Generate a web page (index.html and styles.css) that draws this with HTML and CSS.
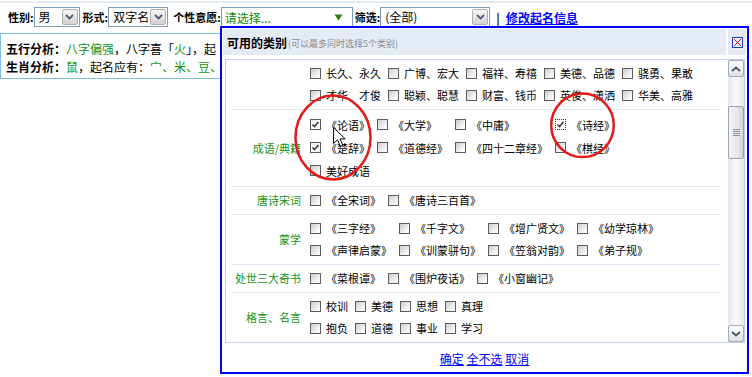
FILE: index.html
```html
<!DOCTYPE html>
<html lang="zh">
<head>
<meta charset="utf-8">
<title>起名 - 类别选择</title>
<link rel="stylesheet" href="styles.css">
</head>
<body>
<div class="topbar">
  <span class="lbl lbl-first">性别:</span>
  <div class="combo c-sex"><span class="val">男</span><span class="btn"><svg width="9" height="6" viewBox="0 0 9 6"><path d="M1 1l3.5 3.5L8 1" fill="none" stroke="#4a5a78" stroke-width="1.8"/></svg></span></div>
  <span class="lbl">形式:</span>
  <div class="combo c-form"><span class="val">双字名</span><span class="btn"><svg width="9" height="6" viewBox="0 0 9 6"><path d="M1 1l3.5 3.5L8 1" fill="none" stroke="#4a5a78" stroke-width="1.8"/></svg></span></div>
  <span class="lbl lbl-wide">个性意愿:</span>
  <div class="picker"><span class="ph">请选择...</span><svg width="9" height="7" viewBox="0 0 9 7"><path d="M0.5 0.5h8L4.5 6.5z" fill="#2f7d1e"/></svg></div>
  <span class="lbl lbl-tight">筛选:</span>
  <div class="combo c-filter"><span class="val">(全部)</span><span class="btn"><svg width="9" height="6" viewBox="0 0 9 6"><path d="M1 1l3.5 3.5L8 1" fill="none" stroke="#4a5a78" stroke-width="1.8"/></svg></span></div>
  <span class="bar">|</span>
  <a class="edit" href="#">修改起名信息</a>
</div>

<div class="analysis">
  <p><b>五行分析：</b><em>八字偏强</em>，八字喜「<em>火</em>」，起</p>
  <p><b>生肖分析：</b><em>鼠</em>，起名应有：<em>宀、米、豆、</em></p>
</div>

<div class="popup">
  <div class="pop-head">
    <div class="pop-title"><b>可用的类别</b><span class="hint">(可以最多同时选择5个类别)</span></div>
    <div class="pop-close"><svg width="11" height="11" viewBox="0 0 11 11"><rect x="0.5" y="0.5" width="10" height="10" fill="#eef2fa" stroke="#1d3fae"/><path d="M2 2l7 7M9 2l-7 7" stroke="#d11" stroke-width="1"/></svg></div>
  </div>
  <div class="pop-body">
    <div class="list">
      <div class="row">
        <div class="cat"></div>
        <div class="opts g5">
          <label class="opt"><span class="cb"></span>长久、永久</label>
          <label class="opt"><span class="cb"></span>广博、宏大</label>
          <label class="opt"><span class="cb"></span>福祥、寿禧</label>
          <label class="opt"><span class="cb"></span>美德、品德</label>
          <label class="opt"><span class="cb"></span>骁勇、果敢</label>
          <label class="opt"><span class="cb"></span>才华、才俊</label>
          <label class="opt"><span class="cb"></span>聪颖、聪慧</label>
          <label class="opt"><span class="cb"></span>财富、钱币</label>
          <label class="opt"><span class="cb"></span>英俊、潇洒</label>
          <label class="opt"><span class="cb"></span>华美、高雅</label>
        </div>
      </div>
      <div class="row tall">
        <div class="cat">成语/典籍</div>
        <div class="opts g4">
          <label class="opt"><span class="cb on"><svg width="9" height="9" viewBox="0 0 9 9"><path d="M1.5 4.5l2 2 4-4.5" fill="none" stroke="#3c3c3c" stroke-width="1.7"/></svg></span>《论语》</label>
          <label class="opt"><span class="cb"></span>《大学》</label>
          <label class="opt"><span class="cb"></span>《中庸》</label>
          <label class="opt"><span class="cb on focus"><svg width="9" height="9" viewBox="0 0 9 9"><path d="M1.5 4.5l2 2 4-4.5" fill="none" stroke="#3c3c3c" stroke-width="1.7"/></svg></span>《诗经》</label>
          <label class="opt"><span class="cb on"><svg width="9" height="9" viewBox="0 0 9 9"><path d="M1.5 4.5l2 2 4-4.5" fill="none" stroke="#3c3c3c" stroke-width="1.7"/></svg></span>《楚辞》</label>
          <label class="opt"><span class="cb"></span>《道德经》</label>
          <label class="opt"><span class="cb"></span>《四十二章经》</label>
          <label class="opt"><span class="cb"></span>《棋经》</label>
          <label class="opt"><span class="cb"></span>美好成语</label>
        </div>
      </div>
      <div class="row">
        <div class="cat">唐诗宋词</div>
        <div class="opts g2">
          <label class="opt"><span class="cb"></span>《全宋词》</label>
          <label class="opt"><span class="cb"></span>《唐诗三百首》</label>
        </div>
      </div>
      <div class="row">
        <div class="cat">蒙学</div>
        <div class="opts g4 even">
          <label class="opt"><span class="cb"></span>《三字经》</label>
          <label class="opt"><span class="cb"></span>《千字文》</label>
          <label class="opt"><span class="cb"></span>《增广贤文》</label>
          <label class="opt"><span class="cb"></span>《幼学琼林》</label>
          <label class="opt"><span class="cb"></span>《声律启蒙》</label>
          <label class="opt"><span class="cb"></span>《训蒙骈句》</label>
          <label class="opt"><span class="cb"></span>《笠翁对韵》</label>
          <label class="opt"><span class="cb"></span>《弟子规》</label>
        </div>
      </div>
      <div class="row">
        <div class="cat">处世三大奇书</div>
        <div class="opts g3">
          <label class="opt"><span class="cb"></span>《菜根谭》</label>
          <label class="opt"><span class="cb"></span>《围炉夜话》</label>
          <label class="opt"><span class="cb"></span>《小窗幽记》</label>
        </div>
      </div>
      <div class="row">
        <div class="cat">格言、名言</div>
        <div class="opts g4">
          <label class="opt"><span class="cb"></span>校训</label>
          <label class="opt"><span class="cb"></span>美德</label>
          <label class="opt"><span class="cb"></span>思想</label>
          <label class="opt"><span class="cb"></span>真理</label>
          <label class="opt"><span class="cb"></span>抱负</label>
          <label class="opt"><span class="cb"></span>道德</label>
          <label class="opt"><span class="cb"></span>事业</label>
          <label class="opt"><span class="cb"></span>学习</label>
        </div>
      </div>
    </div>
    <div class="vbar">
      <div class="arrow"><svg width="10" height="6" viewBox="0 0 10 6"><path d="M1 5l4-3.5L9 5" fill="none" stroke="#4b5872" stroke-width="2"/></svg></div>
      <div class="track">
        <div class="thumb"><svg width="7" height="7" viewBox="0 0 7 7"><path d="M0 0.5h7M0 2.5h7M0 4.5h7M0 6.5h7" stroke="#8a93a3" stroke-width="1"/></svg></div>
      </div>
      <div class="arrow"><svg width="10" height="6" viewBox="0 0 10 6"><path d="M1 1l4 3.5L9 1" fill="none" stroke="#4b5872" stroke-width="2"/></svg></div>
    </div>
  </div>
  <div class="pop-foot"><a href="#">确定</a> <a href="#">全不选</a> <a href="#">取消</a></div>
</div>

<svg class="marks" width="752" height="377" viewBox="0 0 752 377">
  <ellipse cx="333" cy="137.5" rx="37.5" ry="42" fill="none" stroke="#e41a1a" stroke-width="2.5"/>
  <ellipse cx="582.5" cy="125.3" rx="31.3" ry="31.8" fill="none" stroke="#e41a1a" stroke-width="2.5"/>
</svg>
<svg class="cursor" width="14" height="21" viewBox="0 0 14 21"><path d="M0.5 0.5V16.5L4.5 12.8L7.4 19.3L9.8 18.2L7 11.9H12.2Z" fill="#fff" stroke="#000" stroke-width="1"/></svg>
</body>
</html>
```

FILE: styles.css
```css
* { box-sizing: border-box; }
html, body { margin: 0; padding: 0; background: #fff; }
body {
  position: relative;
  width: 752px;
  height: 377px;
  overflow: hidden;
  font-family: "Noto Sans CJK SC", "Noto Sans", sans-serif;
  font-size: 12px;
  color: #000;
}

/* ---------- top bar ---------- */
.topbar {
  display: flex;
  align-items: center;
  height: 26px;
  margin-top: 1px;
  border-top: 2px solid #e4eaf2;
  padding: 4px 0 0 8px;
}
.lbl {
  font-weight: bold;
  font-size: 11px;
  line-height: 20px;
  white-space: nowrap;
  margin-left: 3px;
}
.lbl-first { margin-left: 0; }
.lbl-wide { margin-left: 5px; }
.lbl-tight { margin-left: 2px; }
.combo {
  display: flex;
  align-items: center;
  height: 20px;
  border: 1px solid #7f9db9;
  background: #fff;
}
.combo .val { flex: 1; padding-left: 4px; font-size: 12px; line-height: 18px; white-space: nowrap; }
.combo .btn {
  display: flex;
  align-items: center;
  justify-content: center;
  width: 16px;
  height: 16px;
  margin-right: 1px;
  border: 1px solid #b0b0b0;
  border-radius: 2px;
  background: linear-gradient(#f6f6f6, #d3d3d3);
}
.c-sex { width: 46px; }
.c-form { width: 60px; }
.c-filter { width: 110px; }
.picker {
  display: flex;
  align-items: center;
  width: 132px;
  height: 20px;
  padding-left: 3px;
  border: 1px solid #7f9db9;
  border-bottom: 0;
}
.picker .ph { flex: 1; color: #0a8a0a; font-size: 12px; }
.picker svg { margin-right: 9px; }
.bar { font-weight: bold; margin: 0 6px; color: #222; }
.edit { color: #0000ff; font-weight: bold; font-size: 12px; text-decoration: underline; }

/* ---------- analysis box ---------- */
.analysis {
  width: 222px;
  height: 46px;
  margin-top: 6px;
  padding: 6px 0 2px 5px;
  border: 1px solid #7cbfe2;
  border-right: 0;
}
.analysis p { margin: 0; line-height: 18px; white-space: nowrap; }
.analysis em { font-style: normal; color: #129412; }

/* ---------- popup ---------- */
.popup {
  position: absolute;
  left: 220px;
  top: 26px;
  width: 529px;
  height: 348px;
  display: flex;
  flex-direction: column;
  border: 2px solid #0000ff;
  background: #fff;
}
.pop-head {
  display: flex;
  height: 26px;
  margin: 1px 1px 0 1px;
  background: #e5ebf5;
  flex: none;
}
.pop-title { flex: 1; display: flex; align-items: center; padding-left: 4px; }
.pop-title b { font-size: 12px; }
.hint { font-size: 9px; color: #8c8c8c; margin-left: 1px; padding-top: 3px; }
.pop-close {
  display: flex;
  align-items: center;
  justify-content: center;
  width: 20px;
  border-left: 2px solid #fff;
}
.pop-body {
  display: flex;
  height: 284px;
  margin: 4px 2px 0 3px;
  border: 1px solid #c3d2e6;
  flex: none;
}
.list { flex: 1; overflow: hidden; }
.row {
  display: flex;
  margin: 0 8px 0 5px;
  padding: 2px 0 3px;
  border-bottom: 1px solid #dfe8f4;
}
.row:last-child { border-bottom: 0; }
.row.tall { padding: 3px 0 4px; }
.cat {
  flex: none;
  width: 70px;
  align-self: center;
  text-align: right;
  font-size: 11px;
  color: #139413;
  white-space: nowrap;
}
.opts {
  display: grid;
  margin-left: 9px;
  column-gap: 7px;
  grid-auto-rows: 22px;
  align-items: center;
}
.row.tall .opts { grid-auto-rows: 23px; }
.g2 { grid-template-columns: repeat(2, max-content); }
.g3 { grid-template-columns: repeat(3, max-content); }
.g4 { grid-template-columns: repeat(4, max-content); }
.g5 { grid-template-columns: repeat(5, max-content); }
.g4.even { grid-template-columns: repeat(4, 82px); }
.opt {
  display: flex;
  align-items: center;
  font-size: 11px;
  line-height: 14px;
  white-space: nowrap;
}
.cb {
  flex: none;
  display: flex;
  align-items: center;
  justify-content: center;
  width: 11px;
  height: 11px;
  margin-right: 5px;
  border: 1px solid #5c5c5c;
  background: linear-gradient(135deg, #cdcdcd, #f4f4f4 70%, #fff);
}
.cb.on { background: linear-gradient(135deg, #e6e6e6, #fff 60%); }
.cb.focus { border: 1px dotted #333; background: #fff; }

/* scrollbar column */
.vbar {
  display: flex;
  flex-direction: column;
  width: 16px;
  flex: none;
  background: linear-gradient(90deg, #e3e8ef, #f7f8fa 45%, #f7f8fa 60%, #e3e8ef);
}
.arrow {
  display: flex;
  align-items: center;
  justify-content: center;
  height: 17px;
  border: 1px solid #a4abb6;
  border-radius: 2px;
  background: linear-gradient(#fdfdfd, #dce0e6);
  flex: none;
}
.track { flex: 1; }
.thumb {
  display: flex;
  align-items: center;
  justify-content: center;
  height: 53px;
  margin-top: 29px;
  border: 1px solid #9aa2ad;
  border-radius: 2px;
  background: linear-gradient(90deg, #f4f5f7, #e6e8ec 60%, #cfd3d9);
}

.pop-foot {
  flex: 1;
  padding-top: 8px;
  text-align: center;
  line-height: 16px;
}
.pop-foot a { color: #0000ff; font-size: 12px; text-decoration: underline; }

/* ---------- overlays ---------- */
.marks { position: absolute; left: 0; top: 0; pointer-events: none; }
.cursor { position: absolute; left: 333px; top: 127px; pointer-events: none; }
```
